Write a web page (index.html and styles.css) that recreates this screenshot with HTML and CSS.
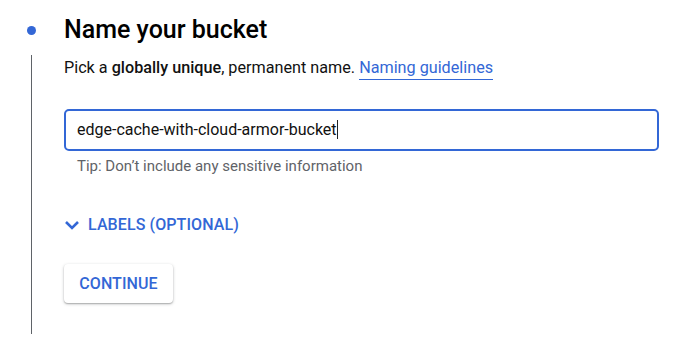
FILE: index.html
```html
<html>
  <head>
    <link rel="stylesheet" href="styles.css">
  </head>
  <body>
    <div class="step">
      <div class="rail">
        <span class="dot"></span>
        <span class="line"></span>
      </div>
      <div class="content">
        <h1 class="title">Name your bucket</h1>
        <p class="desc">Pick a <b>globally unique</b>, permanent name. <a href="#" class="link">Naming guidelines</a></p>
        <div class="field">
          <div class="inputbox">edge-cache-with-cloud-armor-bucket<span class="caret"></span></div>
          <div class="hint">Tip: Don’t include any sensitive information</div>
        </div>
        <div class="labels">
          <svg width="16" height="12" viewBox="0 0 16 12"><path d="M2 3 L8 9 L14 3" fill="none" stroke="#3367d6" stroke-width="2.6"/></svg>
          <span>LABELS (OPTIONAL)</span>
        </div>
        <button class="continue">CONTINUE</button>
      </div>
    </div>
  </body>
</html>
```

FILE: styles.css
```css
body {
  margin: 0;
  font-family: Roboto, Arial, sans-serif;
  background: #fff;
  color: #202124;
}

.step {
  display: flex;
  padding-top: 14px;
}

/* left marker column */
.rail {
  width: 64px;
  display: flex;
  flex-direction: column;
  align-items: center;
  padding-right: 2px;
  box-sizing: border-box;
}

.rail .dot {
  width: 9px;
  height: 9px;
  border-radius: 50%;
  background: #3367d6;
  margin-top: 12px;
}

.rail .line {
  width: 1px;
  height: 279px;
  background: #5f6368;
  margin-top: 20px;
}

.content {
  flex: 1;
  padding-right: 15px;
}

.title {
  font-size: 25px;
  font-weight: 500;
  margin: 0;
  line-height: 32px;
  color: #000;
}

.desc {
  font-size: 16.2px;
  margin: 10px 0 0 0;
  line-height: 24px;
  color: #111;
}

.desc b {
  font-weight: 500;
}

.link {
  color: #3367d6;
  text-decoration: none;
  border-bottom: 1px solid #3367d6;
  padding-bottom: 2px;
}

.field {
  margin-top: 29px;
}

.inputbox {
  height: 42px;
  border: 2px solid #3367d6;
  border-radius: 5px;
  box-sizing: border-box;
  padding: 0 11px;
  font-size: 16px;
  line-height: 38px;
  color: #111;
}

.caret {
  display: inline-block;
  width: 1px;
  height: 19px;
  background: #202124;
  vertical-align: middle;
  margin-top: -3px;
}

.hint {
  font-size: 15px;
  color: #5f6368;
  padding-left: 13px;
  margin-top: 5px;
  line-height: 20px;
}

.labels {
  display: flex;
  align-items: center;
  gap: 8px;
  margin-top: 39px;
  color: #3367d6;
  font-size: 16px;
  font-weight: 500;
  letter-spacing: 0.1px;
}

.continue {
  margin-top: 30px;
  width: 109px;
  height: 39px;
  border: none;
  background: #fff;
  border-radius: 4px;
  box-shadow: 0 1px 3px rgba(60, 64, 67, 0.35), 0 1px 1px rgba(60, 64, 67, 0.2);
  color: #3367d6;
  font-family: Roboto, Arial, sans-serif;
  font-size: 16px;
  font-weight: 500;
  letter-spacing: 0.1px;
}
```
